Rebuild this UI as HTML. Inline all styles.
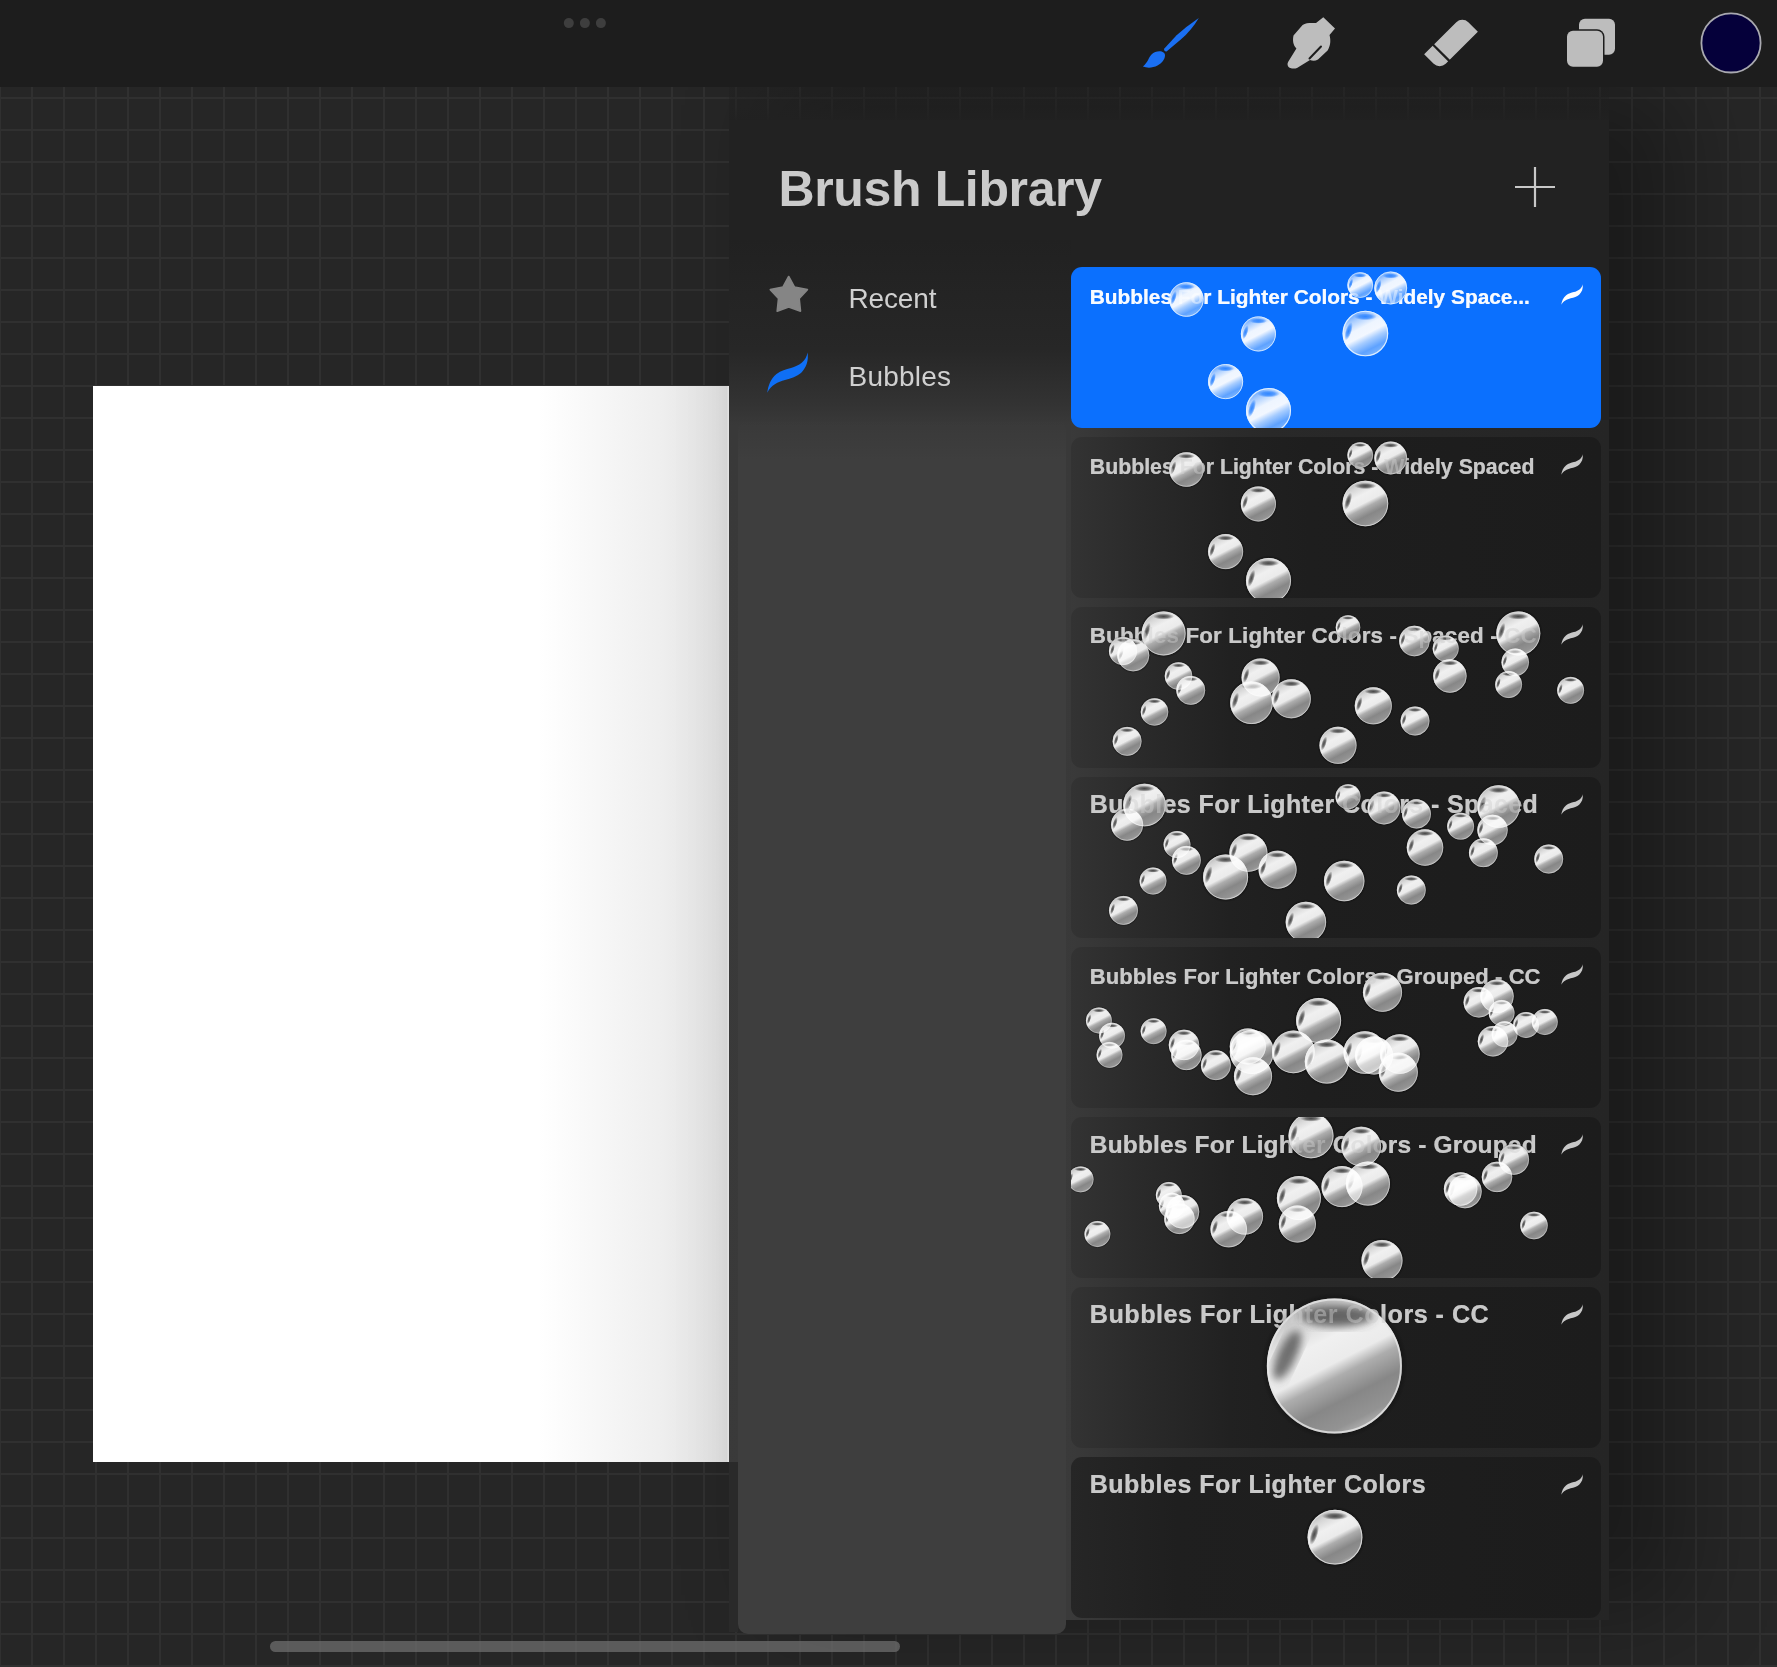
<!DOCTYPE html>
<html><head><meta charset="utf-8"><style>
html,body{margin:0;padding:0;width:1777px;height:1667px;overflow:hidden;background:#262626;}
body{position:relative;font-family:"Liberation Sans",sans-serif;}
.abs{position:absolute;}
#grid{left:0;top:0;width:1777px;height:1667px;
 background-image:linear-gradient(to right,#303030 0,#303030 2px,transparent 2px),linear-gradient(to bottom,#303030 0,#303030 2px,transparent 2px);
 background-size:32px 32px,32px 32px;background-position:-1px 0,0 1px;}
#toolbar{left:0;top:0;width:1777px;height:87px;background:#1d1d1d;}
#canvas{left:93px;top:386px;width:636px;height:1076px;background:linear-gradient(to right,#fff 0,#fff 445px,#f9f9f9 490px,#efefef 565px,#e2e2e2 625px,#dddddd 634px,#ececec 635px,#ececec 636px);}
#panel{left:729px;top:120px;width:880px;height:1500px;background:#222;box-shadow:60px -20px 90px 10px rgba(0,0,0,0.3);}
#side{left:729px;top:240px;width:342px;height:1380px;background:linear-gradient(to bottom,#212121 0,#272727 110px,#333 165px,#393939 185px,#3a3a3a 100%);}
#sideblock{left:738px;top:420px;width:328px;height:1214px;background:linear-gradient(to bottom,rgba(62,62,62,0) 0,#3e3e3e 40px);border-radius:10px;}
#col{left:1071px;top:420px;width:538px;height:1200px;background:linear-gradient(to right,#3a3a3a 0,#313131 65px,#292929 195px,#252525 100%);}
#colfade{display:none;}
#scroll{left:270px;top:1641px;width:630px;height:11px;border-radius:6px;background:rgba(110,110,110,0.75);}
</style></head><body>
<div id="grid" class="abs"></div>
<div id="canvas" class="abs"></div>
<div id="panel" class="abs"></div>
<div id="side" class="abs"></div>
<div id="sideblock" class="abs"></div>
<div id="col" class="abs"></div>
<div id="colfade" class="abs"></div>
<div class="abs" style="left:729px;top:1462px;width:9px;height:170px;background:#2a2a2a"></div>
<div id="scroll" class="abs"></div>
<div id="toolbar" class="abs"></div>
<div class="abs" style="left:729px;top:87px;width:880px;height:33px;background:linear-gradient(to bottom,rgba(30,30,30,0.35) 0,rgba(32,32,32,0.5) 60%,rgba(33,33,33,0.9) 100%)"></div>

<svg class="abs" style="left:0;top:0" width="1777" height="1667" viewBox="0 0 1777 1667">
<defs>
<linearGradient id="gBase" x1="0.27" y1="0.05" x2="0.73" y2="0.95">
 <stop offset="0" stop-color="#bdbdbd"/><stop offset="0.12" stop-color="#d6d6d6"/><stop offset="0.3" stop-color="#f0f0f0"/><stop offset="0.48" stop-color="#ebebeb"/>
 <stop offset="0.58" stop-color="#adadad"/><stop offset="0.75" stop-color="#878787"/><stop offset="0.92" stop-color="#939393"/><stop offset="1" stop-color="#b0b0b0"/></linearGradient>
<radialGradient id="gSpot" cx="0.5" cy="0.5" r="0.5"><stop offset="0" stop-color="#383838" stop-opacity="0.9"/><stop offset="0.5" stop-color="#383838" stop-opacity="0.65"/><stop offset="1" stop-color="#383838" stop-opacity="0"/></radialGradient>
<radialGradient id="gHalo" cx="0.5" cy="0.5" r="0.5"><stop offset="0.88" stop-color="#000" stop-opacity="0.35"/><stop offset="1" stop-color="#000" stop-opacity="0"/></radialGradient>
<g id="bd">
 <circle cx="50" cy="50" r="56" fill="url(#gHalo)"/>
 <circle cx="50" cy="50" r="50" fill="url(#gBase)"/>
 <ellipse cx="50" cy="11.5" rx="24" ry="7" fill="url(#gSpot)"/>
 <ellipse cx="12" cy="45" rx="6.5" ry="20" transform="rotate(18 12 45)" fill="url(#gSpot)"/>
 <circle cx="50" cy="50" r="49" fill="none" stroke="#e6e6e6" stroke-width="2" stroke-opacity="0.8"/>
</g>
<filter id="fb" x="-20%" y="-20%" width="140%" height="140%"><feGaussianBlur stdDeviation="3"/></filter>
<g id="bd2">
 <circle cx="50" cy="50" r="54" fill="url(#gHalo)"/>
 <circle cx="50" cy="50" r="50" fill="url(#gBase)"/>
 <ellipse cx="52" cy="13" rx="27" ry="8" fill="#444" fill-opacity="0.8" filter="url(#fb)"/>
 <ellipse cx="15" cy="42" rx="7" ry="20" transform="rotate(25 15 42)" fill="#444" fill-opacity="0.75" filter="url(#fb)"/>
 <circle cx="50" cy="50" r="49.2" fill="none" stroke="#e6e6e6" stroke-width="1.4" stroke-opacity="0.8"/>
</g>
<linearGradient id="gBlue" x1="0.27" y1="0.05" x2="0.73" y2="0.95">
 <stop offset="0" stop-color="#6aa8ff"/><stop offset="0.15" stop-color="#a9cdff"/><stop offset="0.35" stop-color="#eef5ff"/><stop offset="0.52" stop-color="#f2f7ff"/>
 <stop offset="0.66" stop-color="#a6ccff"/><stop offset="0.85" stop-color="#5ea2ff"/><stop offset="1" stop-color="#7db6ff"/></linearGradient>
<radialGradient id="gSpotB" cx="0.5" cy="0.5" r="0.5"><stop offset="0" stop-color="#2a82ff" stop-opacity="0.95"/><stop offset="0.55" stop-color="#2a82ff" stop-opacity="0.7"/><stop offset="1" stop-color="#2a82ff" stop-opacity="0"/></radialGradient>
<g id="bb">
 <circle cx="50" cy="50" r="50" fill="url(#gBlue)"/>
 <ellipse cx="50" cy="13" rx="25" ry="8" fill="url(#gSpotB)"/>
 <ellipse cx="13" cy="45" rx="7" ry="21" transform="rotate(18 13 45)" fill="url(#gSpotB)"/>
 <circle cx="50" cy="50" r="48.8" fill="none" stroke="#e8f4ff" stroke-width="2.6" stroke-opacity="0.9"/>
</g>

<clipPath id="c0"><rect x="1071" y="267" width="530" height="161" rx="11"/></clipPath>
<clipPath id="c1"><rect x="1071" y="437" width="530" height="161" rx="11"/></clipPath>
<clipPath id="c2"><rect x="1071" y="607" width="530" height="161" rx="11"/></clipPath>
<clipPath id="c3"><rect x="1071" y="777" width="530" height="161" rx="11"/></clipPath>
<clipPath id="c4"><rect x="1071" y="947" width="530" height="161" rx="11"/></clipPath>
<clipPath id="c5"><rect x="1071" y="1117" width="530" height="161" rx="11"/></clipPath>
<clipPath id="c6"><rect x="1071" y="1287" width="530" height="161" rx="11"/></clipPath>
<clipPath id="c7"><rect x="1071" y="1457" width="530" height="161" rx="11"/></clipPath>
<linearGradient id="gCard" x1="0" y1="0" x2="1" y2="0"><stop offset="0" stop-color="#333"/><stop offset="0.12" stop-color="#2b2b2b"/><stop offset="0.3" stop-color="#212121"/><stop offset="0.45" stop-color="#1e1e1e"/><stop offset="1" stop-color="#1c1c1c"/></linearGradient>
<linearGradient id="gCard8" x1="0" y1="0" x2="1" y2="0"><stop offset="0" stop-color="#262626"/><stop offset="0.2" stop-color="#1f1f1f"/><stop offset="1" stop-color="#1c1c1c"/></linearGradient>
</defs>
<rect x="1071" y="267" width="530" height="161" rx="11" fill="#0b70fe"/>
<text x="1089.8" y="304.0" font-family="Liberation Sans" font-weight="bold" font-size="20.85" fill="#ffffff" stroke="#ffffff" stroke-width="0.2" fill-opacity="0.95" textLength="440" lengthAdjust="spacing">Bubbles For Lighter Colors - Widely Space...</text>
<g clip-path="url(#c0)"><use href="#bb" style="mix-blend-mode:screen" transform="translate(1169.2,282.3) scale(0.3440)"/><use href="#bb" style="mix-blend-mode:screen" transform="translate(1347.4,272.2) scale(0.2560)"/><use href="#bb" style="mix-blend-mode:screen" transform="translate(1374.3,271.6) scale(0.3280)"/><use href="#bb" style="mix-blend-mode:screen" transform="translate(1240.9,316.4) scale(0.3500)"/><use href="#bb" style="mix-blend-mode:screen" transform="translate(1342.6,310.7) scale(0.4560)"/><use href="#bb" style="mix-blend-mode:screen" transform="translate(1208.1,364.1) scale(0.3500)"/><use href="#bb" style="mix-blend-mode:screen" transform="translate(1246.0,388.0) scale(0.4500)"/></g>
<text x="1089.8" y="304.0" font-family="Liberation Sans" font-weight="bold" font-size="20.85" fill="#ffffff" fill-opacity="0.45" textLength="440" lengthAdjust="spacing">Bubbles For Lighter Colors - Widely Space...</text>
<path transform="translate(1561.3,284.20000000000005) scale(0.5299,0.5124)" fill="#ffffff" d="M0,40.2 C0.7,33.4 3.7,25.4 9.2,21.4 C13.7,17.9 18.7,16.9 23.7,15.4 C31.7,12.9 38.7,9.4 40.2,0 C41.7,8.4 38.7,15.4 33.7,20.4 C29.7,23.9 23.7,25.9 17.7,27.4 C10.7,29.4 3.7,32.4 0,40.2 Z"/>
<rect x="1071" y="437" width="530" height="161" rx="11" fill="url(#gCard)"/>
<text x="1089.8" y="474.0" font-family="Liberation Sans" font-weight="bold" font-size="21.3" fill="#cfcfcf" stroke="#cfcfcf" stroke-width="0.2" fill-opacity="0.95" textLength="444.6" lengthAdjust="spacing">Bubbles For Lighter Colors - Widely Spaced</text>
<g clip-path="url(#c1)"><use href="#bd" style="mix-blend-mode:screen" transform="translate(1169.2,452.3) scale(0.3440)"/><use href="#bd" style="mix-blend-mode:screen" transform="translate(1347.4,442.2) scale(0.2560)"/><use href="#bd" style="mix-blend-mode:screen" transform="translate(1374.3,441.6) scale(0.3280)"/><use href="#bd" style="mix-blend-mode:screen" transform="translate(1240.9,486.4) scale(0.3500)"/><use href="#bd" style="mix-blend-mode:screen" transform="translate(1342.6,480.7) scale(0.4560)"/><use href="#bd" style="mix-blend-mode:screen" transform="translate(1208.1,534.1) scale(0.3500)"/><use href="#bd" style="mix-blend-mode:screen" transform="translate(1246.0,558.0) scale(0.4500)"/></g>
<text x="1089.8" y="474.0" font-family="Liberation Sans" font-weight="bold" font-size="21.3" fill="#cfcfcf" fill-opacity="0.45" textLength="444.6" lengthAdjust="spacing">Bubbles For Lighter Colors - Widely Spaced</text>
<path transform="translate(1561.3,454.20000000000005) scale(0.5299,0.5124)" fill="#c8c8c8" d="M0,40.2 C0.7,33.4 3.7,25.4 9.2,21.4 C13.7,17.9 18.7,16.9 23.7,15.4 C31.7,12.9 38.7,9.4 40.2,0 C41.7,8.4 38.7,15.4 33.7,20.4 C29.7,23.9 23.7,25.9 17.7,27.4 C10.7,29.4 3.7,32.4 0,40.2 Z"/>
<rect x="1071" y="607" width="530" height="161" rx="11" fill="url(#gCard)"/>
<text x="1089.8" y="642.5" font-family="Liberation Sans" font-weight="bold" font-size="22.4" fill="#cfcfcf" stroke="#cfcfcf" stroke-width="0.2" fill-opacity="0.95" textLength="446.8" lengthAdjust="spacing">Bubbles For Lighter Colors - Spaced - CC</text>
<g clip-path="url(#c2)"><use href="#bd" style="mix-blend-mode:screen" transform="translate(1141.6,611.4) scale(0.4400)"/><use href="#bd" style="mix-blend-mode:screen" transform="translate(1109.0,637.0) scale(0.2800)"/><use href="#bd" style="mix-blend-mode:screen" transform="translate(1117.2,639.3) scale(0.3200)"/><use href="#bd" style="mix-blend-mode:screen" transform="translate(1164.8,662.3) scale(0.2740)"/><use href="#bd" style="mix-blend-mode:screen" transform="translate(1176.3,675.9) scale(0.2880)"/><use href="#bd" style="mix-blend-mode:screen" transform="translate(1140.8,698.2) scale(0.2740)"/><use href="#bd" style="mix-blend-mode:screen" transform="translate(1112.7,726.9) scale(0.2880)"/><use href="#bd" style="mix-blend-mode:screen" transform="translate(1241.6,658.5) scale(0.3800)"/><use href="#bd" style="mix-blend-mode:screen" transform="translate(1230.2,681.4) scale(0.4260)"/><use href="#bd" style="mix-blend-mode:screen" transform="translate(1271.8,679.3) scale(0.3900)"/><use href="#bd" style="mix-blend-mode:screen" transform="translate(1354.8,687.3) scale(0.3700)"/><use href="#bd" style="mix-blend-mode:screen" transform="translate(1319.5,726.8) scale(0.3700)"/><use href="#bd" style="mix-blend-mode:screen" transform="translate(1400.6,706.6) scale(0.2880)"/><use href="#bd" style="mix-blend-mode:screen" transform="translate(1335.8,615.2) scale(0.2440)"/><use href="#bd" style="mix-blend-mode:screen" transform="translate(1399.2,625.8) scale(0.3040)"/><use href="#bd" style="mix-blend-mode:screen" transform="translate(1432.7,635.6) scale(0.2600)"/><use href="#bd" style="mix-blend-mode:screen" transform="translate(1433.2,659.3) scale(0.3340)"/><use href="#bd" style="mix-blend-mode:screen" transform="translate(1496.3,611.4) scale(0.4400)"/><use href="#bd" style="mix-blend-mode:screen" transform="translate(1501.5,648.6) scale(0.2740)"/><use href="#bd" style="mix-blend-mode:screen" transform="translate(1495.2,671.1) scale(0.2680)"/><use href="#bd" style="mix-blend-mode:screen" transform="translate(1557.2,676.9) scale(0.2680)"/></g>
<text x="1089.8" y="642.5" font-family="Liberation Sans" font-weight="bold" font-size="22.4" fill="#cfcfcf" fill-opacity="0.45" textLength="446.8" lengthAdjust="spacing">Bubbles For Lighter Colors - Spaced - CC</text>
<path transform="translate(1561.3,624.2) scale(0.5299,0.5124)" fill="#c8c8c8" d="M0,40.2 C0.7,33.4 3.7,25.4 9.2,21.4 C13.7,17.9 18.7,16.9 23.7,15.4 C31.7,12.9 38.7,9.4 40.2,0 C41.7,8.4 38.7,15.4 33.7,20.4 C29.7,23.9 23.7,25.9 17.7,27.4 C10.7,29.4 3.7,32.4 0,40.2 Z"/>
<rect x="1071" y="777" width="530" height="161" rx="11" fill="url(#gCard)"/>
<text x="1089.8" y="812.6" font-family="Liberation Sans" font-weight="bold" font-size="25.0" fill="#cfcfcf" stroke="#cfcfcf" stroke-width="0.2" fill-opacity="0.95" textLength="448" lengthAdjust="spacing">Bubbles For Lighter Colors - Spaced</text>
<g clip-path="url(#c3)"><use href="#bd" style="mix-blend-mode:screen" transform="translate(1123.2,783.7) scale(0.4260)"/><use href="#bd" style="mix-blend-mode:screen" transform="translate(1111.1,808.7) scale(0.3200)"/><use href="#bd" style="mix-blend-mode:screen" transform="translate(1163.6,831.1) scale(0.2680)"/><use href="#bd" style="mix-blend-mode:screen" transform="translate(1172.0,845.9) scale(0.2880)"/><use href="#bd" style="mix-blend-mode:screen" transform="translate(1139.6,867.6) scale(0.2680)"/><use href="#bd" style="mix-blend-mode:screen" transform="translate(1109.1,896.0) scale(0.2880)"/><use href="#bd" style="mix-blend-mode:screen" transform="translate(1229.4,833.7) scale(0.3800)"/><use href="#bd" style="mix-blend-mode:screen" transform="translate(1203.1,854.5) scale(0.4500)"/><use href="#bd" style="mix-blend-mode:screen" transform="translate(1258.6,850.7) scale(0.3800)"/><use href="#bd" style="mix-blend-mode:screen" transform="translate(1324.0,860.8) scale(0.4040)"/><use href="#bd" style="mix-blend-mode:screen" transform="translate(1285.7,901.8) scale(0.4040)"/><use href="#bd" style="mix-blend-mode:screen" transform="translate(1396.9,875.6) scale(0.2880)"/><use href="#bd" style="mix-blend-mode:screen" transform="translate(1335.5,784.2) scale(0.2500)"/><use href="#bd" style="mix-blend-mode:screen" transform="translate(1367.6,791.6) scale(0.3280)"/><use href="#bd" style="mix-blend-mode:screen" transform="translate(1402.1,799.6) scale(0.2880)"/><use href="#bd" style="mix-blend-mode:screen" transform="translate(1406.8,829.3) scale(0.3640)"/><use href="#bd" style="mix-blend-mode:screen" transform="translate(1447.2,812.8) scale(0.2680)"/><use href="#bd" style="mix-blend-mode:screen" transform="translate(1477.3,785.2) scale(0.4260)"/><use href="#bd" style="mix-blend-mode:screen" transform="translate(1477.3,814.8) scale(0.3040)"/><use href="#bd" style="mix-blend-mode:screen" transform="translate(1469.0,838.3) scale(0.2880)"/><use href="#bd" style="mix-blend-mode:screen" transform="translate(1534.3,844.6) scale(0.2880)"/></g>
<text x="1089.8" y="812.6" font-family="Liberation Sans" font-weight="bold" font-size="25.0" fill="#cfcfcf" fill-opacity="0.45" textLength="448" lengthAdjust="spacing">Bubbles For Lighter Colors - Spaced</text>
<path transform="translate(1561.3,794.2) scale(0.5299,0.5124)" fill="#c8c8c8" d="M0,40.2 C0.7,33.4 3.7,25.4 9.2,21.4 C13.7,17.9 18.7,16.9 23.7,15.4 C31.7,12.9 38.7,9.4 40.2,0 C41.7,8.4 38.7,15.4 33.7,20.4 C29.7,23.9 23.7,25.9 17.7,27.4 C10.7,29.4 3.7,32.4 0,40.2 Z"/>
<rect x="1071" y="947" width="530" height="161" rx="11" fill="url(#gCard)"/>
<text x="1089.8" y="983.5" font-family="Liberation Sans" font-weight="bold" font-size="22.0" fill="#cfcfcf" stroke="#cfcfcf" stroke-width="0.2" fill-opacity="0.95" textLength="450.7" lengthAdjust="spacing">Bubbles For Lighter Colors - Grouped - CC</text>
<g clip-path="url(#c4)"><use href="#bd" style="mix-blend-mode:screen" transform="translate(1086.0,1007.6) scale(0.2580)"/><use href="#bd" style="mix-blend-mode:screen" transform="translate(1099.1,1022.8) scale(0.2580)"/><use href="#bd" style="mix-blend-mode:screen" transform="translate(1096.6,1042.0) scale(0.2580)"/><use href="#bd" style="mix-blend-mode:screen" transform="translate(1140.7,1018.3) scale(0.2580)"/><use href="#bd" style="mix-blend-mode:screen" transform="translate(1168.8,1029.7) scale(0.3040)"/><use href="#bd" style="mix-blend-mode:screen" transform="translate(1171.2,1039.7) scale(0.3040)"/><use href="#bd" style="mix-blend-mode:screen" transform="translate(1201.0,1050.3) scale(0.2980)"/><use href="#bd" style="mix-blend-mode:screen" transform="translate(1229.8,1028.4) scale(0.3600)"/><use href="#bd" style="mix-blend-mode:screen" transform="translate(1229.8,1029.9) scale(0.4400)"/><use href="#bd" style="mix-blend-mode:screen" transform="translate(1234.0,1057.2) scale(0.3800)"/><use href="#bd" style="mix-blend-mode:screen" transform="translate(1272.1,1030.6) scale(0.4260)"/><use href="#bd" style="mix-blend-mode:screen" transform="translate(1296.1,998.0) scale(0.4500)"/><use href="#bd" style="mix-blend-mode:screen" transform="translate(1304.8,1039.6) scale(0.4400)"/><use href="#bd" style="mix-blend-mode:screen" transform="translate(1343.5,1031.2) scale(0.4260)"/><use href="#bd" style="mix-blend-mode:screen" transform="translate(1355.0,1036.5) scale(0.3800)"/><use href="#bd" style="mix-blend-mode:screen" transform="translate(1380.0,1034.2) scale(0.3960)"/><use href="#bd" style="mix-blend-mode:screen" transform="translate(1378.8,1052.7) scale(0.3900)"/><use href="#bd" style="mix-blend-mode:screen" transform="translate(1363.0,972.8) scale(0.3900)"/><use href="#bd" style="mix-blend-mode:screen" transform="translate(1463.6,987.1) scale(0.3040)"/><use href="#bd" style="mix-blend-mode:screen" transform="translate(1480.3,979.5) scale(0.3340)"/><use href="#bd" style="mix-blend-mode:screen" transform="translate(1488.7,1000.1) scale(0.2580)"/><use href="#bd" style="mix-blend-mode:screen" transform="translate(1491.7,1021.3) scale(0.2580)"/><use href="#bd" style="mix-blend-mode:screen" transform="translate(1477.8,1026.0) scale(0.3040)"/><use href="#bd" style="mix-blend-mode:screen" transform="translate(1513.1,1012.1) scale(0.2580)"/><use href="#bd" style="mix-blend-mode:screen" transform="translate(1531.9,1009.1) scale(0.2580)"/></g>
<text x="1089.8" y="983.5" font-family="Liberation Sans" font-weight="bold" font-size="22.0" fill="#cfcfcf" fill-opacity="0.45" textLength="450.7" lengthAdjust="spacing">Bubbles For Lighter Colors - Grouped - CC</text>
<path transform="translate(1561.3,964.2) scale(0.5299,0.5124)" fill="#c8c8c8" d="M0,40.2 C0.7,33.4 3.7,25.4 9.2,21.4 C13.7,17.9 18.7,16.9 23.7,15.4 C31.7,12.9 38.7,9.4 40.2,0 C41.7,8.4 38.7,15.4 33.7,20.4 C29.7,23.9 23.7,25.9 17.7,27.4 C10.7,29.4 3.7,32.4 0,40.2 Z"/>
<rect x="1071" y="1117" width="530" height="161" rx="11" fill="url(#gCard)"/>
<text x="1089.8" y="1152.6" font-family="Liberation Sans" font-weight="bold" font-size="24.5" fill="#cfcfcf" stroke="#cfcfcf" stroke-width="0.2" fill-opacity="0.95" textLength="446.8" lengthAdjust="spacing">Bubbles For Lighter Colors - Grouped</text>
<g clip-path="url(#c5)"><use href="#bd" style="mix-blend-mode:screen" transform="translate(1067.7,1166.4) scale(0.2580)"/><use href="#bd" style="mix-blend-mode:screen" transform="translate(1084.5,1221.1) scale(0.2580)"/><use href="#bd" style="mix-blend-mode:screen" transform="translate(1155.9,1182.1) scale(0.2580)"/><use href="#bd" style="mix-blend-mode:screen" transform="translate(1158.9,1192.8) scale(0.2580)"/><use href="#bd" style="mix-blend-mode:screen" transform="translate(1165.8,1195.1) scale(0.3340)"/><use href="#bd" style="mix-blend-mode:screen" transform="translate(1164.2,1203.6) scale(0.3040)"/><use href="#bd" style="mix-blend-mode:screen" transform="translate(1226.6,1198.2) scale(0.3640)"/><use href="#bd" style="mix-blend-mode:screen" transform="translate(1210.5,1210.9) scale(0.3640)"/><use href="#bd" style="mix-blend-mode:screen" transform="translate(1288.5,1113.3) scale(0.4500)"/><use href="#bd" style="mix-blend-mode:screen" transform="translate(1341.4,1126.7) scale(0.3960)"/><use href="#bd" style="mix-blend-mode:screen" transform="translate(1276.9,1176.1) scale(0.4400)"/><use href="#bd" style="mix-blend-mode:screen" transform="translate(1278.9,1205.5) scale(0.3700)"/><use href="#bd" style="mix-blend-mode:screen" transform="translate(1321.5,1166.1) scale(0.4100)"/><use href="#bd" style="mix-blend-mode:screen" transform="translate(1345.9,1161.6) scale(0.4400)"/><use href="#bd" style="mix-blend-mode:screen" transform="translate(1361.5,1240.0) scale(0.4100)"/><use href="#bd" style="mix-blend-mode:screen" transform="translate(1443.9,1172.3) scale(0.3340)"/><use href="#bd" style="mix-blend-mode:screen" transform="translate(1448.3,1174.8) scale(0.3340)"/><use href="#bd" style="mix-blend-mode:screen" transform="translate(1481.8,1161.7) scale(0.3040)"/><use href="#bd" style="mix-blend-mode:screen" transform="translate(1498.6,1144.3) scale(0.3040)"/><use href="#bd" style="mix-blend-mode:screen" transform="translate(1520.3,1211.8) scale(0.2740)"/></g>
<text x="1089.8" y="1152.6" font-family="Liberation Sans" font-weight="bold" font-size="24.5" fill="#cfcfcf" fill-opacity="0.45" textLength="446.8" lengthAdjust="spacing">Bubbles For Lighter Colors - Grouped</text>
<path transform="translate(1561.3,1134.2) scale(0.5299,0.5124)" fill="#c8c8c8" d="M0,40.2 C0.7,33.4 3.7,25.4 9.2,21.4 C13.7,17.9 18.7,16.9 23.7,15.4 C31.7,12.9 38.7,9.4 40.2,0 C41.7,8.4 38.7,15.4 33.7,20.4 C29.7,23.9 23.7,25.9 17.7,27.4 C10.7,29.4 3.7,32.4 0,40.2 Z"/>
<rect x="1071" y="1287" width="530" height="161" rx="11" fill="url(#gCard)"/>
<text x="1089.8" y="1322.6" font-family="Liberation Sans" font-weight="bold" font-size="25.2" fill="#cfcfcf" stroke="#cfcfcf" stroke-width="0.2" fill-opacity="0.95" textLength="399" lengthAdjust="spacing">Bubbles For Lighter Colors - CC</text>
<g clip-path="url(#c6)"><use href="#bd2" style="mix-blend-mode:screen" transform="translate(1266.8,1298.4) scale(1.3520)"/></g>
<text x="1089.8" y="1322.6" font-family="Liberation Sans" font-weight="bold" font-size="25.2" fill="#cfcfcf" fill-opacity="0.45" textLength="399" lengthAdjust="spacing">Bubbles For Lighter Colors - CC</text>
<path transform="translate(1561.3,1304.2) scale(0.5299,0.5124)" fill="#c8c8c8" d="M0,40.2 C0.7,33.4 3.7,25.4 9.2,21.4 C13.7,17.9 18.7,16.9 23.7,15.4 C31.7,12.9 38.7,9.4 40.2,0 C41.7,8.4 38.7,15.4 33.7,20.4 C29.7,23.9 23.7,25.9 17.7,27.4 C10.7,29.4 3.7,32.4 0,40.2 Z"/>
<rect x="1071" y="1457" width="530" height="161" rx="11" fill="url(#gCard8)"/>
<text x="1089.8" y="1492.8" font-family="Liberation Sans" font-weight="bold" font-size="25.0" fill="#cfcfcf" stroke="#cfcfcf" stroke-width="0.2" fill-opacity="0.95" textLength="335.8" lengthAdjust="spacing">Bubbles For Lighter Colors</text>
<g clip-path="url(#c7)"><use href="#bd" style="mix-blend-mode:screen" transform="translate(1307.6,1509.8) scale(0.5480)"/></g>
<text x="1089.8" y="1492.8" font-family="Liberation Sans" font-weight="bold" font-size="25.0" fill="#cfcfcf" fill-opacity="0.45" textLength="335.8" lengthAdjust="spacing">Bubbles For Lighter Colors</text>
<path transform="translate(1561.3,1474.2) scale(0.5299,0.5124)" fill="#c8c8c8" d="M0,40.2 C0.7,33.4 3.7,25.4 9.2,21.4 C13.7,17.9 18.7,16.9 23.7,15.4 C31.7,12.9 38.7,9.4 40.2,0 C41.7,8.4 38.7,15.4 33.7,20.4 C29.7,23.9 23.7,25.9 17.7,27.4 C10.7,29.4 3.7,32.4 0,40.2 Z"/>
<text x="778.5" y="205.7" font-family="Liberation Sans" font-weight="bold" font-size="50" fill="#cbcbcb" textLength="323.5" lengthAdjust="spacing">Brush Library</text>
<path d="M1515,187 H1555 M1535,167 V207" stroke="#c8c8c8" stroke-width="2.2"/>
<path fill="#858585" stroke="#858585" stroke-width="1.6" stroke-linejoin="round" d="M788.7,276.5 L794.4,287 L807.4,289.6 L799.2,298.5 L800.5,311.2 L788.7,306.9 L777.2,311.2 L778.5,298.5 L770.3,289.6 L783,287 Z"/>
<text x="848.5" y="307.6" font-family="Liberation Sans" font-size="28" fill="#d0d0d0" textLength="88" lengthAdjust="spacing">Recent</text>
<path transform="translate(767.3,352.6) scale(1.0000,1.0000)" fill="#0f6ff5" d="M0,40.2 C0.7,33.4 3.7,25.4 9.2,21.4 C13.7,17.9 18.7,16.9 23.7,15.4 C31.7,12.9 38.7,9.4 40.2,0 C41.7,8.4 38.7,15.4 33.7,20.4 C29.7,23.9 23.7,25.9 17.7,27.4 C10.7,29.4 3.7,32.4 0,40.2 Z"/>
<text x="848.5" y="385.5" font-family="Liberation Sans" font-size="28" fill="#d0d0d0" textLength="102.6" lengthAdjust="spacing">Bubbles</text>
<circle cx="568.8" cy="23.1" r="5" fill="#3e3e3e"/>
<circle cx="584.9" cy="23.1" r="5" fill="#3e3e3e"/>
<circle cx="600.9" cy="23.1" r="5" fill="#3e3e3e"/>
<path fill="#1a6ff2" d="M1198.8,17.9 Q1186,26.5 1176.6,35.2 L1163.9,48.9 Q1164.3,51.9 1166.5,51.5 L1180.8,39.6 Q1192,29.5 1198.8,17.9 Z"/>
<path fill="#1a6ff2" d="M1163.5,52.5 C1161,50.5 1155,51 1151.5,54.5 C1148.5,57.5 1148,62.5 1142.9,66.5 C1147,68.3 1153,68 1157.5,65.5 C1162,63 1165,59 1165,55.5 C1165,54 1164.5,53.2 1163.5,52.5 Z"/>
<path fill="#bdbdbd" d="M1323.3,17.3 L1335,28.6 L1329.5,35 C1331,40 1330.5,46 1327.6,50.4 L1318,59.5 C1315.5,61 1312.5,61 1310,60 L1297,68 C1294,69.2 1289.5,68.5 1288.2,66.5 C1287,64.5 1287.5,62.3 1289,60.5 L1296.4,48.5 C1293,45 1292.5,40 1293.5,35.5 L1302.6,25 C1305,23.3 1308.5,23 1312,23 L1316,23 Z"/>
<path d="M1321,46.5 L1309.5,58.5" stroke="#1d1d1d" stroke-width="2" stroke-linecap="round"/>
<g transform="translate(1451,43) rotate(-45)"><path fill="#bdbdbd" d="M-27,-11 H18.5 A8.5,8.5 0 0 1 27,-2.5 V11 H-18.5 A8.5,8.5 0 0 1 -27,2.5 Z"/><rect x="-15" y="-12.5" width="2.3" height="25" fill="#1d1d1d"/></g>
<rect x="1579" y="18.7" width="36" height="36" rx="6" fill="#bdbdbd"/>
<rect x="1565.5" y="29.3" width="39" height="39" rx="7.5" fill="#1d1d1d"/>
<rect x="1567" y="30.8" width="36" height="36" rx="6" fill="#bdbdbd"/>
<circle cx="1731" cy="42.9" r="29.6" fill="#05003a" stroke="#a9a9b0" stroke-width="1.8"/>
</svg>
</body></html>
